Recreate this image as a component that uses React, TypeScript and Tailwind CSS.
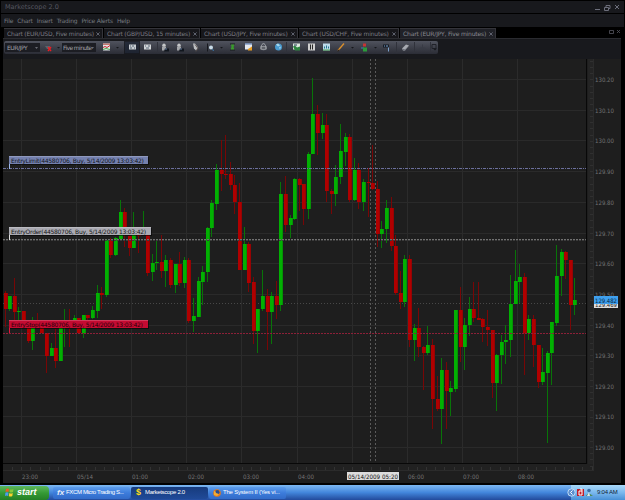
import { ReactNode } from 'react';
import clsx from 'clsx';

const UI_FONT = "font-['DejaVu_Sans',sans-serif]";
const XP_FONT = "font-['Liberation_Sans',sans-serif]";

type Dir = 'u' | 'd';
// high, low, body top, body bottom, direction
type Candle = [number, number, number, number, Dir];

const candles: Candle[] = [
  [291, 327, 293, 309, 'd'], [296, 311, 296, 309, 'u'], [278, 320, 296, 312, 'd'], [307, 320, 311, 312, 'u'],
  [311, 323, 311, 323, 'd'], [321, 343, 321, 341, 'd'], [317, 350, 327, 341, 'u'], [313, 328, 325, 327, 'd'],
  [327, 333, 327, 333, 'd'], [333, 373, 333, 356, 'd'], [343, 356, 348, 356, 'u'], [329, 368, 348, 361, 'd'],
  [325, 361, 327, 361, 'u'], [309, 347, 322, 326, 'u'], [309, 347, 322, 324, 'd'], [315, 327, 318, 324, 'u'],
  [318, 333, 318, 333, 'd'], [315, 338, 315, 333, 'u'], [315, 324, 315, 318, 'd'], [306, 319, 310, 318, 'u'],
  [285, 318, 293, 311, 'u'], [287, 309, 293, 295, 'd'], [239, 297, 240, 295, 'u'], [238, 258, 240, 255, 'd'],
  [237, 256, 238, 255, 'u'], [200, 241, 212, 239, 'u'], [208, 247, 212, 231, 'd'], [230, 256, 236, 248, 'd'],
  [212, 248, 235, 248, 'u'], [227, 253, 235, 236, 'd'], [211, 235, 233, 235, 'u'], [233, 276, 235, 273, 'd'],
  [254, 281, 263, 272, 'u'], [240, 270, 262, 263, 'u'], [235, 278, 262, 271, 'd'], [255, 287, 260, 271, 'u'],
  [258, 288, 260, 285, 'd'], [264, 293, 264, 285, 'u'], [252, 286, 264, 283, 'd'], [257, 288, 260, 283, 'u'],
  [258, 323, 260, 321, 'd'], [298, 332, 316, 321, 'u'], [277, 317, 281, 317, 'u'], [266, 305, 272, 282, 'u'],
  [227, 282, 228, 272, 'u'], [200, 237, 203, 228, 'u'], [164, 210, 170, 204, 'u'], [140, 191, 170, 174, 'd'],
  [135, 179, 174, 175, 'd'], [162, 190, 174, 185, 'd'], [175, 214, 185, 202, 'd'], [183, 270, 202, 270, 'd'],
  [227, 270, 244, 270, 'u'], [242, 292, 244, 283, 'd'], [277, 344, 282, 331, 'd'], [309, 353, 309, 331, 'u'],
  [270, 311, 296, 309, 'u'], [289, 350, 296, 312, 'd'], [292, 344, 296, 312, 'u'], [281, 319, 296, 305, 'd'],
  [182, 311, 194, 305, 'u'], [176, 232, 194, 225, 'd'], [215, 238, 218, 225, 'u'], [178, 220, 179, 219, 'u'],
  [178, 211, 179, 185, 'd'], [184, 225, 184, 209, 'd'], [152, 219, 154, 209, 'u'], [78, 154, 114, 154, 'u'],
  [105, 155, 114, 133, 'd'], [113, 139, 125, 133, 'u'], [114, 202, 125, 191, 'd'], [189, 214, 191, 194, 'd'],
  [165, 206, 177, 194, 'u'], [124, 184, 151, 177, 'u'], [133, 166, 137, 152, 'u'], [134, 202, 137, 200, 'd'],
  [158, 201, 170, 200, 'u'], [163, 209, 170, 202, 'd'], [179, 211, 182, 202, 'u'], [168, 217, 182, 183, 'd'],
  [145, 190, 183, 189, 'd'], [181, 247, 189, 234, 'd'], [221, 248, 229, 234, 'u'], [200, 243, 208, 229, 'u'],
  [197, 251, 208, 246, 'd'], [235, 295, 246, 293, 'd'], [271, 309, 293, 302, 'd'], [255, 307, 259, 302, 'u'],
  [255, 347, 259, 340, 'd'], [324, 361, 328, 340, 'u'], [308, 357, 328, 347, 'd'], [346, 390, 347, 353, 'd'],
  [326, 355, 345, 353, 'u'], [339, 429, 345, 399, 'd'], [376, 411, 399, 409, 'd'], [358, 444, 370, 409, 'u'],
  [362, 429, 370, 391, 'd'], [381, 416, 388, 392, 'u'], [310, 392, 310, 389, 'u'], [287, 362, 310, 347, 'd'],
  [318, 370, 325, 347, 'u'], [297, 336, 309, 325, 'u'], [282, 322, 309, 318, 'd'], [282, 320, 318, 320, 'd'],
  [318, 342, 319, 327, 'd'], [310, 346, 327, 330, 'd'], [330, 398, 330, 383, 'd'], [354, 411, 355, 383, 'u'],
  [335, 384, 342, 355, 'u'], [325, 364, 340, 342, 'u'], [275, 357, 304, 340, 'u'], [250, 304, 281, 304, 'u'],
  [264, 303, 277, 282, 'u'], [273, 375, 277, 333, 'd'], [315, 340, 319, 333, 'u'], [315, 367, 319, 345, 'd'],
  [345, 388, 345, 382, 'd'], [348, 385, 372, 382, 'u'], [351, 443, 353, 373, 'u'], [322, 385, 322, 353, 'u'],
  [245, 326, 276, 323, 'u'], [249, 296, 252, 276, 'u'], [251, 279, 252, 260, 'd'], [260, 330, 260, 305, 'd'],
  [278, 315, 300, 305, 'u'],
];

const FIRST_X = 5.2;
const STEP = 4.594;

const gridX = [21, 76, 131, 186, 241, 297, 352, 407, 462, 517];
const gridY = [79, 110, 140, 171, 202, 233, 263, 294, 325, 355, 386, 416, 447];
const prices = ['130.20', '130.10', '130.00', '129.90', '129.80', '129.70', '129.60', '129.50', '129.40', '129.30', '129.20', '129.10', '129.00'];
const times: [string, number][] = [
  ['23:00', 22], ['05/14', 77], ['01:00', 132], ['02:00', 188], ['03:00', 243], ['04:00', 298], ['06:00', 408], ['07:00', 463], ['08:00', 518],
];

function Chart() {
  return (
    <svg width="618" height="424" viewBox="3 59 618 424" shapeRendering="crispEdges" className="block">
      <rect x="3" y="59" width="618" height="424" fill="#1e1e1e" />
      {gridX.map((x) => <rect key={x} x={x} y="59" width="1" height="404" fill="#2b2b2b" />)}
      {gridY.map((y) => <rect key={y} x="3" y={y} width="583" height="1" fill="#2a2a2a" />)}

      {/* axes */}
      <rect x="588" y="59" width="5" height="411" fill="#242424" />
      <rect x="3" y="464" width="590" height="6" fill="#212121" />
      {Array.from({ length: 67 }, (_, i) => (
        <rect key={i} x="590" y={61 + Math.round(i * 6.13)} width="3" height="1" fill="#303030" />
      ))}
      {Array.from({ length: 64 }, (_, i) => (
        <rect key={i} x={12 + Math.round(i * 9.2)} y="467" width="1" height="3" fill="#333333" />
      ))}
      <rect x="593" y="59" width="1" height="412" fill="#2b2b2b" />
      <rect x="3" y="470" width="590" height="1" fill="#2b2b2b" />
      <rect x="586" y="59" width="1" height="405" fill="#080808" />
      <rect x="3" y="463" width="584" height="1" fill="#080808" />

      {/* last price and crosshair */}
      <line x1="3" x2="586" y1="303.5" y2="303.5" stroke="#484848" strokeDasharray="1 2" />
      <line x1="370.5" x2="370.5" y1="59" y2="463" stroke="#5a5a5a" strokeDasharray="2 2" />
      <line x1="375.5" x2="375.5" y1="59" y2="463" stroke="#5a5a5a" strokeDasharray="2 2" />

      {candles.map(([high, low, top, bottom, dir], i) => {
        const x = Math.floor(FIRST_X + i * STEP);
        const up = dir === 'u';
        return (
          <g key={i}>
            <rect x={x} y={high} width="1" height={low - high} fill={up ? '#087408' : '#780606'} />
            <rect x={x - 1} y={top} width="4" height={Math.max(1, bottom - top)} fill={up ? '#02b002' : '#b00000'} />
            <rect x={x + 2} y={top} width="1" height={Math.max(1, bottom - top)} fill={up ? '#059305' : '#960303'} />
          </g>
        );
      })}

      <line x1="3" x2="586" y1="168.5" y2="168.5" stroke="#6b6f9c" strokeDasharray="3 1 1 1" />
      <line x1="3" x2="586" y1="239.5" y2="239.5" stroke="#707070" strokeDasharray="2 1" />
      <line x1="3" x2="586" y1="240.5" y2="240.5" stroke="#3c3c3c" strokeDasharray="2 1" />
      <line x1="3" x2="586" y1="333.5" y2="333.5" stroke="#8c2038" strokeDasharray="2 1" />

      <g fontFamily="DejaVu Sans, sans-serif" fontSize="6" fill="#727272">
        {prices.map((p, i) => (
          <text key={p} x="595" y={gridY[i] + 3} textLength="19" lengthAdjust="spacingAndGlyphs">{p}</text>
        ))}
        {times.map(([t, x]) => (
          <text key={t} x={x} y="479" textLength="16" lengthAdjust="spacingAndGlyphs">{t}</text>
        ))}
      </g>
      <rect x="347" y="472" width="52" height="8" fill="#dcdcdc" />
      <text x="348" y="478.5" fontFamily="DejaVu Sans, sans-serif" fontSize="6" fill="#111" textLength="50" lengthAdjust="spacingAndGlyphs">05/14/2009 05:20</text>
      <rect x="594" y="300" width="24" height="8" fill="#dedede" />
      <text x="595" y="307" fontFamily="DejaVu Sans, sans-serif" fontSize="6" fill="#222" textLength="22" lengthAdjust="spacingAndGlyphs">129.469</text>
      <rect x="594" y="296" width="24" height="8" fill="#3fa0ee" />
      <text x="595" y="302.5" fontFamily="DejaVu Sans, sans-serif" fontSize="6" fill="#06243c" textLength="22" lengthAdjust="spacingAndGlyphs">129.482</text>
    </svg>
  );
}

function OrderTag({ className, stem, width, children }: { className: string; stem: string; width: string; children: string }) {
  return (
    <div className={clsx('absolute left-[6px] flex flex-col items-start', width)}>
      <div className={clsx('flex h-[8px] w-full items-center border-t border-white/20 pl-[2px] text-[6px] leading-none tracking-[-0.27px] whitespace-nowrap shadow-[1px_1px_0_#0008]', className)}>{children}</div>
      <div className={clsx('h-[5px] w-[1px]', stem)} />
    </div>
  );
}

function Tab({ label, width, active }: { label: string; width: string; active?: boolean }) {
  return (
    <div className={clsx('flex h-[10px] shrink-0 items-center justify-between border-t border-r border-[#34343a] pr-[2px] pl-[3px] text-[6px] leading-none whitespace-nowrap', width, active ? 'bg-[#202127] text-[#888990]' : 'bg-[#17171b] text-[#7b7c84]')}>
      <span className="tracking-[-0.18px]">{label}</span>
      <svg width="4" height="4" viewBox="0 0 4 4" stroke="#686b78" strokeWidth=".9"><path d="M.4.4 3.6 3.6M3.6.4.4 3.6" /></svg>
    </div>
  );
}

function Icon({ x, children }: { x: number; children: ReactNode }) {
  return <g transform={`translate(${x} 2.5)`}>{children}</g>;
}

function Person() {
  return (
    <>
      <circle cx="2" cy="1.8" r="1.7" fill="#c4c6c8" />
      <path d="M0 3h4v4H0z" fill="#a5a7ab" />
      <path d="M3 5h4v3H2z" fill="#11161e" />
      <path d="M3 5h2v1H3z" fill="#627a9c" />
    </>
  );
}

function ToolbarIcons() {
  return (
    <svg width="341" height="13" viewBox="97 0 341 13" className="ml-[1px] block shrink-0">
      <rect x="124.500" y=".5" width="15" height="12" fill="#1b2230" stroke="#14161c" opacity=".8" />
      <Icon x={103}>
        <path d="M0 0h7v7H0z" fill="#dfe3e8" /><path d="M0 0h7v1.500H0z" fill="#c57870" />
        <path d="m0 4 2-1 2 1 3-2" stroke="#d02828" fill="none" /><path d="m0 6 3-1 4 1" stroke="#49a849" fill="none" />
      </Icon>
      <path d="M116 6h3l-1.500 1.500zM220 6h3l-1.500 1.500zM351 6h3l-1.500 1.500zM374 6h3l-1.500 1.500z" fill="#15161a" />
      <Icon x={129}><path d="M0 1h7v5H0z" fill="#c5cace" /><path d="M1 2h1v1H1zM3 2h2v1H3zM1 4h2v1H1zM5 4h1v1H5z" fill="#526070" /></Icon>
      <Icon x={144}><path d="M0 1h7v5H0z" fill="#d0d3d6" /><path d="M1 2h1v1H1zM4 2h2v1H4zM2 4h3v1H2z" fill="#596878" /></Icon>
      <Icon x={162}><Person /></Icon>
      <Icon x={177}><Person /></Icon>
      <Icon x={193}><path d="M0 0h2l3 4-2 3-2-2z" fill="#bbbdc0" /><path d="m2 1 3 4-2 3" fill="none" stroke="#584d48" strokeWidth=".8" /></Icon>
      <Icon x={207}><path d="M.5 0v8" stroke="#17191e" /><circle cx="4" cy="4" r="2" fill="#c9dce8" /><path d="m5 6 2 1" stroke="#3a78ac" /></Icon>
      <Icon x={230}><path d="M0 0h5v1H0zM0 6h5v1H0z" fill="#171b1c" /><path d="M1 1h3.500L3.500 3.500 4.500 6H.5l1-2.500z" fill="#3a9c2c" /></Icon>
      <Icon x={245}><path d="M0 0h7v6H0z" fill="#e4e8ee" /><path d="M0 0h7v1H0z" fill="#547bb8" /><path d="M3 5.500 7 3v4H3z" fill="#e69a20" /></Icon>
      <Icon x={260}><ellipse cx="3.500" cy="4.500" rx="3.500" ry="2.200" fill="#8b8e94" /><path d="M1 3.500C2-1 5-1 6 3.500" stroke="#aaaeb4" fill="none" /><path d="M2 4h3v1H2z" fill="#343840" /></Icon>
      <Icon x={275}><circle cx="3.500" cy="3.500" r="3.500" fill="#4a9bcf" /><path d="m1 1 2-1 2 2-2 1zM4 4l2-1-1 3z" fill="#a8d8ee" /></Icon>
      <path d="M286.500 1v11M396.500 1v11M414.500 1v11M430.500 1v11M157.500 1v11" stroke="#30323b" />
      <Icon x={293}><path d="M0 0h7v6H0z" fill="#dce7dd" /><path d="m0 3 2-1 2 2 3-1v4H2z" fill="#2e8440" /><path d="M1 1h3v1H1z" fill="#253c54" /></Icon>
      <Icon x={308}><path d="M0 0h7v7H0z" fill="#cfcfcf" /><path d="M2.500 1v5M4.500 1v5" stroke="#282828" /></Icon>
      <Icon x={323}><path d="M0 0h7v7H0z" fill="#bddbeb" /><path d="M1 5V3h1v2zM3 5V2h1v3zM5 5V3h1v2z" fill="#277890" /><path d="M0 6h7v1H0z" fill="#4da051" /></Icon>
      <Icon x={338}><path d="m0 7 6-7" stroke="#dc902b" strokeWidth="1.300" /><path d="m0 8 1-2" stroke="#31251a" /></Icon>
      <Icon x={361}><path d="M2 0h3v3H2z" fill="#c83434" /><path d="M0 4h3v1H0z" fill="#3a80bd" /><path d="M2 4h4v4H2z" fill="#2b9b3b" /></Icon>
      <Icon x={383}><path d="M0 1h6v3H0z" fill="#151b25" /><path d="M1 2.500h1M3 2.500h2M5.500 4v4" stroke="#7ba0c9" /></Icon>
      <Icon x={402}><path d="m0 5 4-4 3 1-4 5H1z" fill="#a8abb2" /><path d="m0 5 3 1 4-4-4 5H1z" fill="#6b6e78" /></Icon>
      <Icon x={419}><path d="M1 4h5l1 2H0zM3 1h1v3H3z" fill="#383b45" /></Icon>
      <Icon x={432}><path d="M0 1h4v4H0z" fill="none" stroke="#202229" /><path d="M1 5h4L3 7z" fill="#17191e" /></Icon>
    </svg>
  );
}

function TaskButton({ icon, label, active, tracking }: { icon: ReactNode; label: string; active?: boolean; tracking: string }) {
  return (
    <div className={clsx(XP_FONT, 'flex h-[12px] w-[77px] shrink-0 items-center gap-[2px] rounded-[2px] pl-[4px] text-[6px] whitespace-nowrap text-white', active ? 'bg-linear-to-b from-[#173b7d] to-[#204a98]' : 'bg-linear-to-b from-[#5c9cec] via-[#3c7cdb] to-[#326bc8]')}>
      {icon}
      <span className={tracking}>{label}</span>
    </div>
  );
}

export default function App() {
  return (
    <div className={clsx(UI_FONT, 'flex h-[500px] w-[625px] flex-col overflow-hidden bg-black')}>
      <header className="mx-[1px] mt-[1px] flex h-[13px] shrink-0 items-center justify-between border-b border-black bg-[#18191d] pr-[4px] pl-[4px]">
        <span className="text-[6.5px] leading-none text-[#565760]">Marketscope 2.0</span>
        <svg width="25" height="7" viewBox="0 0 25 7" fill="none" stroke="#6c6e7b">
          <path d="M0 5.500h5" /><path d="M9.500 3.500h4v3h-4zM11 3V1.500h4v3h-1M20 1l4 4M24 1l-4 4" />
        </svg>
      </header>
      <nav className="mx-[1px] flex h-[13px] shrink-0 items-center gap-[4px] bg-[#18191d] pl-[3px] text-[6px] leading-none tracking-[-0.2px] text-[#777981]">
        {['File', 'Chart', 'Insert', 'Trading', 'Price Alerts', 'Help'].map((m) => <span key={m}>{m}</span>)}
      </nav>
      <div className="flex h-[11px] shrink-0 items-end justify-between pr-[4px] pl-[4px]">
        <div className="flex gap-[1px]">
          <Tab label="Chart (EUR/USD, Five minutes)" width="w-[99px]" />
          <Tab label="Chart (GBP/USD, 15 minutes)" width="w-[96px]" />
          <Tab label="Chart (USD/JPY, Five minutes)" width="w-[97px]" />
          <Tab label="Chart (USD/CHF, Five minutes)" width="w-[100px]" />
          <Tab label="Chart (EUR/JPY, Five minutes)" width="w-[96px]" active />
        </div>
        <svg width="12" height="10" viewBox="0 0 12 10" fill="none" stroke="#55565f" strokeWidth=".8">
          <path d="M.5 2.500h4v3h-4zM8 2l3 3M11 2 8 5" />
        </svg>
      </div>
      <main className="mr-[4px] ml-[3px] flex h-[445px] shrink-0 flex-col border-t border-[#2a2b30] bg-[#18191d]">
        <div className="mt-[2px] ml-[1px] flex h-[13px] w-[434px] shrink-0 items-center rounded-[2px] bg-linear-to-b from-[#50535e] to-[#2b2d36]">
          <div className="ml-[1px] flex h-[9px] w-[35px] shrink-0 items-center justify-between bg-[#1c1d23] pr-[2px] pl-[2px] text-[6px] leading-none text-[#a0a2a8]">
            <span className="tracking-[-0.45px]">EUR/JPY</span>
            <svg width="3" height="2"><path d="M0 0h3L1.500 2z" fill="#686a72" /></svg>
          </div>
          <svg width="22" height="13" viewBox="40 0 22 13" className="shrink-0">
            <path d="M45 5h5v3h-3z" fill="#59646c" /><path d="m48 6 3 4M51 6l-3 4" stroke="#ed1c22" strokeWidth="1.300" /><path d="M57 6h3l-1.500 1.500z" fill="#15161a" />
          </svg>
          <div className="flex h-[9px] w-[34px] shrink-0 items-center justify-between bg-[#1c1d23] pr-[2px] pl-[1px] text-[6px] leading-none text-[#a0a2a8]">
            <span className="tracking-[-0.6px] whitespace-nowrap">Five minute</span>
            <svg width="3" height="2"><path d="M0 0h3L1.500 2z" fill="#686a72" /></svg>
          </div>
          <ToolbarIcons />
        </div>
        <div className="relative mt-[5px]">
          <Chart />
          <div className="absolute top-[97px] left-0"><OrderTag width="w-[139px]" className="bg-[#7480ae] text-[#111522]" stem="bg-[#9db8ee]">EntryLimit(44580706, Buy, 5/14/2009 13:03:42)</OrderTag></div>
          <div className="absolute top-[168px] left-0"><OrderTag width="w-[142px]" className="bg-[#aaaab2] text-[#151515]" stem="bg-[#e0e0e0]">EntryOrder(44580706, Buy, 5/14/2009 13:03:42)</OrderTag></div>
          <div className="absolute top-[261px] left-0"><OrderTag width="w-[139px]" className="bg-[#c40b32] text-[#280008]" stem="bg-[#e0143c]">EntryStop(44580706, Buy, 5/14/2009 13:03:42)</OrderTag></div>
        </div>
      </main>
      <footer className="mt-auto flex h-[15px] shrink-0 items-center bg-linear-to-b from-[#7cb7f2] via-[#4386dc] to-[#234a9c]">
        <div className={clsx(XP_FONT, 'flex h-[14px] w-[49px] shrink-0 items-center gap-[3px] rounded-r-[4px] bg-linear-to-b from-[#5cb95c] via-[#359a35] to-[#247f25] pl-[5px] text-[9px] font-bold text-white italic')}>
          <svg width="9" height="9" viewBox="0 0 9 9">
            <path d="M1 1q2-1 3 0L3.500 4Q2 3 .5 4z" fill="#ef5a24" /><path d="M4.800 1.300Q6 2 8.500 1L8 4q-2 1-3.500 0z" fill="#83c83a" />
            <path d="M.4 4.700q1.600-1 3 0L3 8Q1.500 7 0 8z" fill="#4c9bf0" /><path d="M4.300 5q1.500 1 3.500 0L7.300 8q-2 1-3.500 0z" fill="#fbd12d" />
          </svg>
          start
        </div>
        <div className="ml-[4px] flex gap-[1px]">
          <TaskButton tracking="tracking-[-0.35px]" label="FXCM Micro Trading S..." icon={<span className="w-[7px] text-[8px] leading-none font-bold text-[#e9edf6] italic">fx</span>} />
          <TaskButton tracking="tracking-[-0.3px]" label="Marketscope 2.0" active icon={<span className="w-[8px] pl-[1px] text-[9px] leading-none font-bold text-[#ffdc18]">$</span>} />
          <TaskButton
            tracking="tracking-[-0.2px]"
            label="The System II (Yes vi..."
            icon={<svg width="8" height="8" viewBox="0 0 8 8" className="shrink-0"><circle cx="4" cy="4" r="3.800" fill="#e87816" /><circle cx="4.300" cy="3.300" r="2.200" fill="#284f94" /><path d="M1 2q2 0 2 2l3 1-2 2-3-1z" fill="#f5ab32" /></svg>}
          />
        </div>
        <div className={clsx(XP_FONT, 'ml-auto flex h-full w-[54px] shrink-0 items-center bg-linear-to-b from-[#a8d8f8] via-[#7ab8ee] to-[#4890d6] text-[6px] text-[#0e1d33]')}>
          <svg width="27" height="9" viewBox="0 0 27 9" className="-ml-[4px] shrink-0">
            <circle cx="4.500" cy="4.500" r="3.700" fill="#5c90d0" stroke="#d7ebfb" strokeWidth=".8" /><path d="M5.500 2.500 3.500 4.500l2 2" stroke="#fff" fill="none" />
            <path d="M10 1h7v7h-7z" fill="#c01c28" /><path d="M12 3v4h3V3zM13 1h2v2" fill="none" stroke="#fff" />
            <circle cx="22" cy="2.500" r="1.800" fill="#396da6" /><path d="M19 8q2-5 7 0z" fill="#518c5b" /><path d="m20 8 2-4 1 4z" fill="#dce9ee" />
          </svg>
          <span className="ml-[3px] tracking-[-0.2px] whitespace-nowrap">9:04 AM</span>
        </div>
      </footer>
    </div>
  );
}
